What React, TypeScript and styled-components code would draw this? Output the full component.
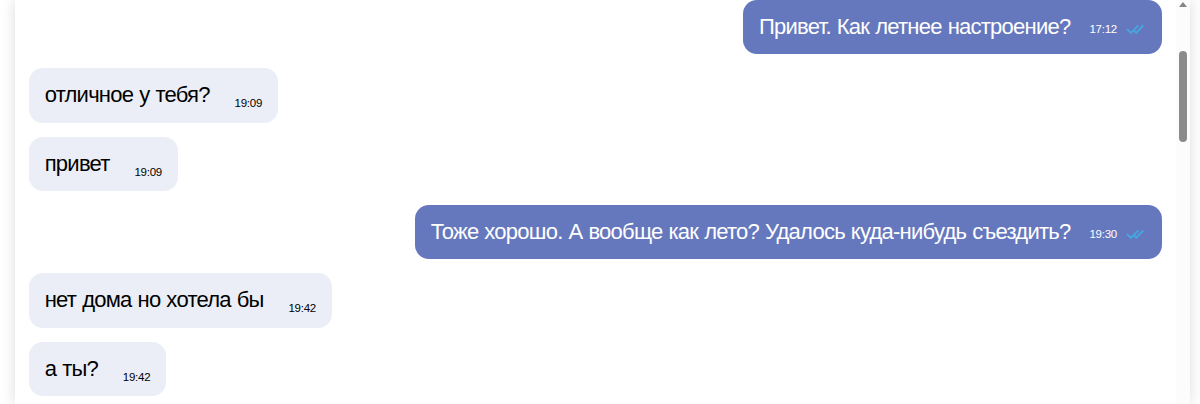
import React from 'react';
import styled, {createGlobalStyle} from 'styled-components';

const GlobalStyle = createGlobalStyle`
  * {
    box-sizing: border-box;
  }
  body {
    margin: 0;
    background: #fff;
    font-family: "Liberation Sans", Arial, sans-serif;
    overflow: hidden;
  }
`;
const Page = styled.div`
  height: 404px;
  padding: 0 10px 0 15px;
  overflow: hidden;
`;
const Chat = styled.div`
  display: flex;
  height: 100%;
  background: #fff;
  box-shadow: 0 0 14px rgba(0, 0, 0, 0.14);
`;
const Messages = styled.div`
  flex: 1;
  display: flex;
  flex-direction: column;
  gap: 14.06px;
  padding: 0 14px 0 13.5px;
`;
const Bubble = styled.div<{ $own: boolean }>`
  display: flex;
  flex-shrink: 0;
  align-self: ${p => p.$own ? 'flex-end' : 'flex-start'};
  gap: ${p => p.$own ? '19px' : '24.8px'};
  height: 54.3px;
  padding: 0 16px 0 16.2px;
  border-radius: 14px;
  color: ${p => p.$own ? '#fff' : '#000'};
  background: ${p => p.$own ? '#6678bd' : '#ebeef6'};
`;
const Text = styled.div`
  padding-top: 14px;
  font-size: 22px;
  line-height: 26px;
  letter-spacing: -0.75px;
  word-spacing: 0.6px;
  white-space: nowrap;
`;
const Meta = styled.div<{ $own: boolean }>`
  display: flex;
  align-items: center;
  gap: 9px;
  height: 14px;
  margin-top: ${p => p.$own ? '22px' : '28px'};
  font-size: 11.5px;
  line-height: 14px;
  letter-spacing: -0.25px;
`;
const Ticks = styled.svg`
  width: 18px;
  height: 10px;
  margin-right: 2px;
  fill: none;
  stroke: #45a6e2;
  stroke-width: 1.9;
`;
const Scrollbar = styled.div`
  display: flex;
  flex-direction: column;
  align-items: center;
  width: 14px;
  background: #fcfcfc;
`;
const Arrow = styled.div`
  margin-top: 2px;
  border: 4px solid transparent;
  border-top: 0;
  border-bottom: 5px solid #858585;
`;
const Thumb = styled.div`
  width: 8px;
  height: 91px;
  margin-top: 44px;
  border-radius: 4px;
  background: #8b8b8b;
`;

type Message = {
  id: number;
  text: string;
  time: string;
  own: boolean;
}

const messages: Message[] = [
  {id: 1, text: 'Привет. Как летнее настроение?', time: '17:12', own: true},
  {id: 2, text: 'отличное у тебя?', time: '19:09', own: false},
  {id: 3, text: 'привет', time: '19:09', own: false},
  {id: 4, text: 'Тоже хорошо. А вообще как лето? Удалось куда-нибудь съездить?', time: '19:30', own: true},
  {id: 5, text: 'нет дома но хотела бы', time: '19:42', own: false},
  {id: 6, text: 'а ты?', time: '19:42', own: false},
];

function App() {
  return (
    <Page>
      <GlobalStyle/>
      <Chat>
        <Messages>
          {messages.map(({id, text, time, own}) =>
            <Bubble key={id} $own={own}>
              <Text>{text}</Text>
              <Meta $own={own}>
                <span>{time}</span>
                {own && <Ticks viewBox="0 0 18 10">
                  <path d="M0.800 4.800l4 4 7.500-7.500M7.500 6l2.800 2.800 7-7.500"/>
                </Ticks>}
              </Meta>
            </Bubble>
          )}
        </Messages>
        <Scrollbar>
          <Arrow/>
          <Thumb/>
        </Scrollbar>
      </Chat>
    </Page>
  );
}

export default App;
